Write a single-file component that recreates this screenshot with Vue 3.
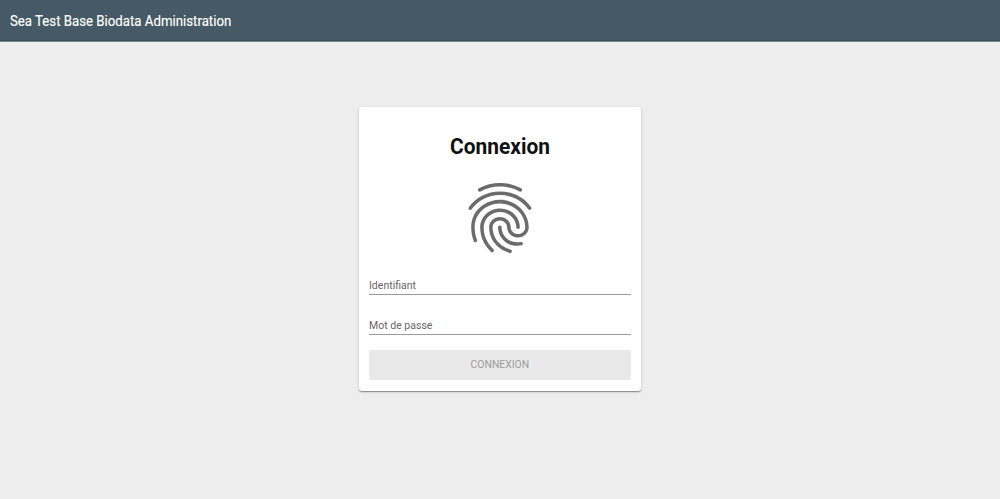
<script setup>
import { ref } from 'vue'
const login = ref('')
const password = ref('')
</script>

<template>
  <div class="page">
    <header class="bar"><span class="title">Sea Test Base Biodata Administration</span></header>
    <main class="content">
      <form class="card" @submit.prevent>
        <h1>Connexion</h1>
        <svg class="finger" viewBox="0 0 24 24" aria-hidden="true">
          <path d="M17.81 4.47c-.08 0-.16-.02-.23-.06C15.66 3.42 14 3 12.01 3c-1.98 0-3.86.47-5.57 1.41-.24.13-.54.04-.68-.2-.13-.24-.04-.55.2-.68C7.82 2.52 9.86 2 12.01 2c2.13 0 3.99.47 6.03 1.52.25.13.34.43.21.67-.09.18-.26.28-.44.28z" />
          <path d="M3.5 9.72c-.1 0-.2-.03-.29-.09-.23-.16-.28-.47-.12-.7.99-1.4 2.25-2.5 3.75-3.27C9.98 4.04 14 4.03 17.15 5.65c1.5.77 2.76 1.86 3.75 3.25.16.22.11.54-.12.7-.23.16-.54.11-.7-.12-.9-1.26-2.04-2.25-3.39-2.94-2.87-1.47-6.54-1.47-9.4.01-1.36.7-2.5 1.7-3.4 2.96-.08.14-.23.21-.39.21z" />
          <path d="M9.75 21.79c-.13 0-.26-.05-.35-.15-.87-.87-1.34-1.43-2.01-2.64-.69-1.23-1.05-2.73-1.05-4.34 0-2.97 2.54-5.39 5.66-5.39s5.66 2.42 5.66 5.39c0 .28-.22.5-.5.5s-.5-.22-.5-.5c0-2.42-2.09-4.39-4.66-4.39-2.57 0-4.66 1.97-4.66 4.39 0 1.44.32 2.77.93 3.85.64 1.15 1.08 1.64 1.85 2.42.19.2.19.51 0 .71-.11.1-.24.15-.37.15z" />
          <path d="M16.92 19.94c-1.19 0-2.24-.3-3.1-.89-1.49-1.01-2.38-2.65-2.38-4.39 0-.28.22-.5.5-.5s.5.22.5.5c0 1.41.72 2.74 1.94 3.56.71.48 1.54.71 2.54.71.24 0 .64-.03 1.04-.1.27-.05.53.13.58.41.05.27-.13.53-.41.58-.57.11-1.07.12-1.21.12z" />
          <path d="M14.91 22c-.04 0-.09-.01-.13-.02-1.59-.44-2.63-1.03-3.72-2.1-1.4-1.39-2.17-3.24-2.17-5.22 0-1.62 1.38-2.94 3.08-2.94 1.7 0 3.08 1.32 3.08 2.94 0 1.07.93 1.94 2.08 1.94s2.08-.87 2.08-1.94c0-3.77-3.25-6.83-7.25-6.83-2.84 0-5.44 1.58-6.61 4.03-.39.81-.59 1.76-.59 2.8 0 .78.07 2.01.67 3.61.1.26-.03.55-.29.64-.26.1-.55-.04-.64-.29-.49-1.31-.73-2.61-.73-3.96 0-1.2.23-2.29.68-3.24 1.33-2.79 4.28-4.6 7.51-4.6 4.55 0 8.25 3.51 8.25 7.83 0 1.62-1.38 2.94-3.08 2.94s-3.08-1.32-3.08-2.94c0-1.07-.93-1.94-2.08-1.94s-2.08.87-2.08 1.94c0 1.71.66 3.31 1.87 4.51.95.94 1.86 1.46 3.27 1.85.27.07.42.35.35.61-.05.23-.26.38-.47.38z" />
        </svg>
        <label class="field"><input v-model="login" type="text" placeholder="Identifiant"></label>
        <label class="field"><input v-model="password" type="password" placeholder="Mot de passe"></label>
        <button class="submit" disabled><span class="caption">CONNEXION</span></button>
      </form>
    </main>
  </div>
</template>

<style>
body { margin: 0; }
</style>

<style scoped>
.page {
  height: 499px;
  background: #ededed;
  font-family: Roboto, sans-serif;
  display: flex;
  flex-direction: column;
}
.bar {
  height: 42px;
  box-sizing: border-box;
  background: #455a64;
  border-bottom: 1px solid #798890;
  box-shadow: inset 0 -1px #3a4f59;
  color: #fff;
  font-size: 14px;
  line-height: 42px;
  padding-left: 10px;
}
.title {
  display: inline-block;
  transform: scaleX(0.945);
  transform-origin: left;
  -webkit-text-stroke: 0.15px #fff;
}
.content {
  display: flex;
  justify-content: center;
  padding-top: 65px;
}
.card {
  box-sizing: border-box;
  width: 282px;
  height: 284px;
  background: #fff;
  border-radius: 3px;
  box-shadow: 0 1px 1px rgba(0, 0, 0, 0.34), 0 1px 3px rgba(0, 0, 0, 0.14);
  padding: 0 10px;
  display: flex;
  flex-direction: column;
}
h1 {
  margin: 26px 0 0;
  text-align: center;
  font-size: 21.5px;
  line-height: 28px;
  color: #111;
  transform: scaleX(0.973);
}
.finger {
  width: 84px;
  height: 84px;
  flex: none;
  align-self: center;
  margin-top: 15px;
  fill: #6b6b6b;
}
.field {
  display: block;
  box-sizing: border-box;
  height: 22px;
  margin: 13px 0 0;
  padding-top: 4px;
  border-bottom: 1px solid #999;
}
.field + .field {
  margin-top: 18px;
}
.field input {
  display: block;
  box-sizing: border-box;
  width: 107%;
  height: 17px;
  padding: 0;
  border: 0;
  background: none;
  outline: none;
  font: 11.5px/17px Roboto, sans-serif;
  transform: scaleX(0.915);
  transform-origin: left;
}
.field input::placeholder {
  color: #666;
  opacity: 1;
}
.submit {
  height: 30px;
  margin: 15px 0 0;
  padding: 0;
  border: 0;
  border-radius: 2px;
  background: #e9e9e9;
  color: #9c9c9c;
  font: 11.3px/30px Roboto, sans-serif;
}
.caption {
  display: inline-block;
  transform: scaleX(0.92);
}
</style>
